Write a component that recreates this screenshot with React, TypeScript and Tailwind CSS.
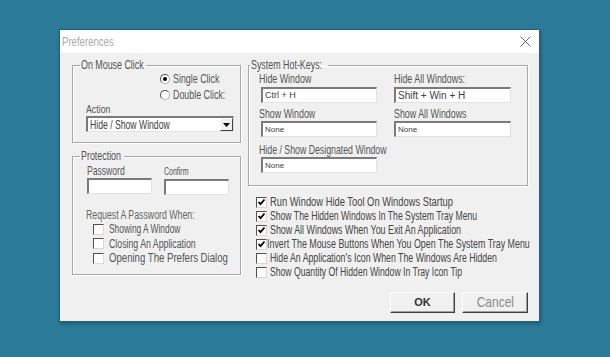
import React from 'react';

const FONT = "font-['Liberation_Sans',Arial,sans-serif]";

const OPTIONS = [
  { text: "Run Window Hide Tool On Windows Startup", checked: true, sx: 'scale-x-[0.78]' },
  { text: "Show The Hidden Windows In The System Tray Menu", checked: true, sx: 'scale-x-[0.72]' },
  { text: "Show All Windows When You Exit An Application", checked: true, sx: 'scale-x-[0.74]' },
  { text: "Invert The Mouse Buttons When You Open The System Tray Menu", checked: true, sx: 'scale-x-[0.74]' },
  { text: "Hide An Application's Icon When The Windows Are Hidden", checked: false, sx: 'scale-x-[0.73]' },
  { text: "Show Quantity Of Hidden Window In Tray Icon Tip", checked: false, sx: 'scale-x-[0.72]' },
];

const PROTECT = [
  { text: "Showing A Window", sx: 'scale-x-[0.7]' },
  { text: "Closing An Application", sx: 'scale-x-[0.73]' },
  { text: "Opening The Prefers Dialog", sx: 'scale-x-[0.8]' },
];

// the app's font is a narrow face; squeeze Liberation Sans to match
function T({ children, className }: { children: React.ReactNode; className?: string }) {
  return <span className={`inline-block whitespace-nowrap origin-left ${className ?? 'scale-x-[0.75]'}`}>{children}</span>;
}

function Group({ title, className, legendClass, children }: { title: string; className?: string; legendClass?: string; children: React.ReactNode }) {
  return (
    <fieldset className={`min-w-0 border border-[#a8a8a8] shadow-[inset_1px_1px_0_#ffffff,1px_1px_0_#ffffff] ${className ?? ''}`}>
      <legend className={`px-[1px] text-[12px] leading-[13px] text-[#505050] ${legendClass ?? ''}`}>
        <T className="scale-x-[0.74]">{title}</T>
      </legend>
      {children}
    </fieldset>
  );
}

function Field({ value, className, textClass }: { value?: string; className?: string; textClass?: string }) {
  return (
    <div className={`h-[16px] bg-white border-t-2 border-l-2 border-r border-b border-t-[#7a7a7a] border-l-[#7a7a7a] border-r-[#e2e2e2] border-b-[#e2e2e2] flex items-center pl-[2px] overflow-hidden ${className ?? ''}`}>
      {value && <span className={`text-[#404040] whitespace-nowrap ${textClass ?? 'text-[9px]'}`}>{value}</span>}
    </div>
  );
}

function Check({ checked }: { checked: boolean }) {
  return (
    <span className="w-[11px] h-[11px] shrink-0 bg-white border-t border-l border-t-[#505050] border-l-[#505050] border-r border-b border-r-[#d8d8d8] border-b-[#d8d8d8] flex items-center justify-center">
      {checked && (
        <svg width="9" height="9" viewBox="0 0 9 9">
          <path d="M1.5 4 L3.5 6.2 L7.5 1.5" fill="none" stroke="#000" strokeWidth="1.8" />
        </svg>
      )}
    </span>
  );
}

function Radio({ checked, label }: { checked: boolean; label: string }) {
  return (
    <div className="flex items-center gap-[3px] h-[14px]">
      <span className="w-[10px] h-[10px] shrink-0 rounded-full bg-white border border-[#b0b0b0] border-t-[#505050] border-l-[#505050] flex items-center justify-center">
        {checked && <span className="w-[4px] h-[4px] rounded-full bg-black" />}
      </span>
      <span className="text-[12px] text-[#555]"><T className="scale-x-[0.74]">{label}</T></span>
    </div>
  );
}

function Button({ children, className }: { children: React.ReactNode; className?: string }) {
  return (
    <button className={`w-[65px] h-[21px] bg-[#f0f0f0] border border-t-white border-l-white border-r-[#404040] border-b-[#404040] shadow-[inset_-1px_-1px_0_#a0a0a0] flex items-center justify-center ${className ?? ''}`}>
      {children}
    </button>
  );
}

export default function App() {
  return (
    <div className={`w-[610px] h-[357px] bg-[#2b7a97] pt-[29px] pl-[59px] ${FONT}`}>
      <div className="w-[481px] h-[293px] border border-[#1f5f78] bg-[#f0f0f0] flex flex-col shadow-[1px_2px_3px_rgba(0,0,0,0.25)]">
        {/* title bar */}
        <div className="h-[23px] bg-white flex items-center justify-between pl-[2px] pr-[8px]">
          <span className="text-[12px] text-[#ababab]"><T className="scale-x-[0.8]">Preferences</T></span>
          <svg width="11" height="11" viewBox="0 0 11 11">
            <path d="M0.5 0.5 L10.5 10.5 M10.5 0.5 L0.5 10.5" stroke="#666" strokeWidth="1" />
          </svg>
        </div>

        <div className="flex gap-[7px] pl-[12px] pt-[6px]">
          {/* left column */}
          <div className="w-[169px] shrink-0 flex flex-col gap-[7px]">
            <Group title="On Mouse Click" className="pl-[13px] pr-[6px] pb-[10px]" legendClass="ml-[-6px] w-[66px]">
              <div className="ml-[74px] flex flex-col gap-[2px]">
                <Radio checked label="Single Click" />
                <Radio checked={false} label="Double Click:" />
              </div>
              <div className="text-[11px] leading-[12px] text-[#555] mt-[1px]"><T className="scale-x-[0.8]">Action</T></div>
              <div className="mt-[1px] h-[16px] bg-white border-t-2 border-l-2 border-r border-b border-t-[#7a7a7a] border-l-[#7a7a7a] border-r-[#e2e2e2] border-b-[#e2e2e2] flex items-center justify-between pl-[2px]">
                <span className="text-[12px] text-[#404040]"><T className="scale-x-[0.72]">Hide / Show Window</T></span>
                <span className="w-[13px] h-[13px] shrink-0 bg-[#f0f0f0] border-r border-b border-[#404040] border-t border-l border-t-white border-l-white flex items-center justify-center">
                  <svg width="7" height="4" viewBox="0 0 7 4"><path d="M0 0 H7 L3.5 4 Z" fill="#000" /></svg>
                </span>
              </div>
            </Group>

            <Group title="Protection" className="pl-[13px] pr-[6px] pb-[10px] h-[125px]" legendClass="ml-[-6px] w-[44px]">
              <div className="flex">
                <div className="ml-[1px] w-[65px]">
                  <div className="text-[13px] leading-[15px] text-[#555]"><T className="scale-x-[0.66]">Password</T></div>
                  <Field className="w-[65px]" />
                </div>
                <div className="ml-[12px] w-[65px]">
                  <div className="text-[10px] leading-[15px] text-[#555] pt-[1px]"><T className="scale-x-[0.7]">Confirm</T></div>
                  <Field className="w-[65px]" />
                </div>
              </div>
              <div className="mt-[14px] text-[12px] leading-[12px] text-[#666]"><T className="scale-x-[0.73]">Request A Password When:</T></div>
              <div className="flex flex-col mt-[1px]">
                {PROTECT.map((p) => (
                  <div key={p.text} className="flex items-center h-[14.5px] ml-[7px] gap-[5px]">
                    <Check checked={false} />
                    <span className="text-[12px] text-[#555]"><T className={p.sx}>{p.text}</T></span>
                  </div>
                ))}
              </div>
            </Group>
          </div>

          {/* right column */}
          <div className="w-[280px] shrink-0 flex flex-col">
            <Group title="System Hot-Keys:" className="pl-[10px] pr-[14px] pb-[12px]" legendClass="ml-[-9px] w-[78px]">
              <div className="grid grid-cols-[117px_117px] gap-x-[18px]">
                <div>
                  <div className="text-[12px] leading-[15px] text-[#555]"><T className="scale-x-[0.74]">Hide Window</T></div>
                  <Field value="Ctrl + H" className="ml-[2px] w-[116px]" />
                </div>
                <div>
                  <div className="text-[12px] leading-[15px] text-[#555]"><T className="scale-x-[0.74]">Hide All Windows:</T></div>
                  <Field value="Shift + Win + H" className="w-[117px]" textClass="text-[10px]" />
                </div>
                <div className="mt-[5px]">
                  <div className="text-[12px] leading-[13px] text-[#555]"><T className="scale-x-[0.74]">Show Window</T></div>
                  <Field value="None" className="ml-[2px] w-[116px]" textClass="text-[8px]" />
                </div>
                <div className="mt-[5px]">
                  <div className="text-[12px] leading-[13px] text-[#555]"><T className="scale-x-[0.74]">Show All Windows</T></div>
                  <Field value="None" className="w-[117px]" textClass="text-[8px]" />
                </div>
                <div className="mt-[6px] col-span-2">
                  <div className="text-[12px] leading-[14px] text-[#555]"><T className="scale-x-[0.73]">Hide / Show Designated Window</T></div>
                  <Field value="None" className="ml-[2px] w-[116px]" textClass="text-[8px]" />
                </div>
              </div>
            </Group>

            <div className="mt-[9px] flex flex-col pl-[8px]">
              {OPTIONS.map((o, i) => (
                <div key={o.text} className={`flex items-center h-[14px] ${i === 3 ? 'gap-[0px]' : 'gap-[3px]'}`}>
                  <Check checked={o.checked} />
                  <span className="text-[12px] text-[#444]"><T className={o.sx}>{o.text}</T></span>
                </div>
              ))}
            </div>

            <div className="mt-[13px] flex justify-end gap-[7px]">
              <Button className="text-[11px] font-bold text-[#333]">OK</Button>
              <Button className="w-[66px] text-[15px] text-[#8a8a8a]">
                <span className="inline-block scale-x-[0.8]">Cancel</span>
              </Button>
            </div>
          </div>
        </div>
      </div>
    </div>
  );
}
